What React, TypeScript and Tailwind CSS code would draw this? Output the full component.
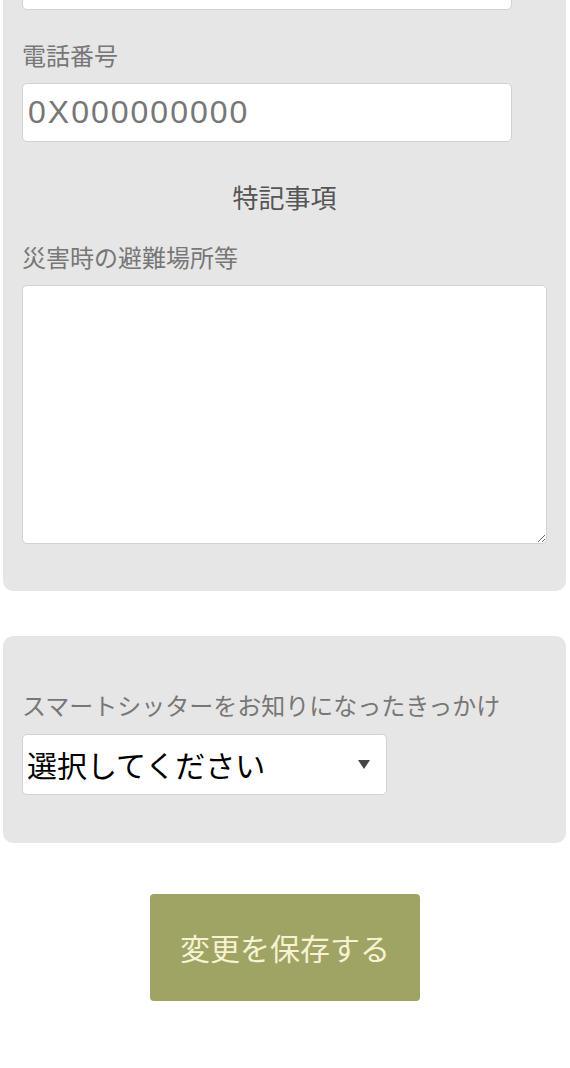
import React from "react";

const font = { fontFamily: '"Noto Sans CJK JP", "Noto Sans", sans-serif' };

const App = () => {
  return (
    <div
      className="min-h-screen bg-white flex flex-col items-stretch overflow-hidden"
      style={font}
    >
      {/* Contact / notes panel (scrolled, top cut off) */}
      <div className="-mt-[70px] ml-[3px] mr-[4px] bg-[#e6e6e6] rounded-[10px] px-[19px] pt-[21px] pb-[47px] flex flex-col">
        <input
          type="text"
          className="w-[490px] h-[59px] bg-white border border-[#d2d2d2] rounded-[5px] px-[5px] text-[30px] outline-none"
        />

        <label className="mt-[27px] text-[24px] leading-[36px] text-[#777]">
          電話番号
        </label>
        <input
          type="tel"
          placeholder="0X000000000"
          className="mt-[10px] w-[490px] h-[59px] bg-white border border-[#d2d2d2] rounded-[5px] px-[5px] text-[32px] tracking-[2px] text-[#333] placeholder:text-[#777] outline-none"
          style={{ fontFamily: '"Liberation Sans", "Noto Sans", sans-serif' }}
        />

        <p className="mt-[35px] text-center text-[26px] leading-[39px] text-[#555]">
          特記事項
        </p>

        <label className="mt-[23px] text-[24px] leading-[36px] text-[#777]">
          災害時の避難場所等
        </label>
        <textarea className="mt-[10px] w-full h-[259px] bg-white border border-[#d2d2d2] rounded-[5px] p-2 text-[24px] outline-none resize-y" />
      </div>

      {/* How did you hear about us */}
      <div className="mt-[45px] ml-[3px] mr-[4px] bg-[#e6e6e6] rounded-[10px] px-[19px] pt-[51px] pb-[48px] flex flex-col">
        <label className="text-[24px] leading-[36px] text-[#777]">
          スマートシッターをお知りになったきっかけ
        </label>
        <div className="relative mt-[11px] w-[365px]">
          <select className="w-full h-[61px] appearance-none bg-white border border-[#d2d2d2] rounded-[5px] pl-[4px] pr-10 text-[30px] text-black outline-none">
            <option>選択してください</option>
          </select>
          <svg
            className="absolute left-[336px] top-[26px] w-[12px] h-[9px] pointer-events-none"
            viewBox="0 0 12 9"
          >
            <polygon points="0,0 12,0 6,9" fill="#444" />
          </svg>
        </div>
      </div>

      {/* Save */}
      <div className="mt-[51px] flex justify-center">
        <button className="w-[270px] h-[107px] bg-[#9fa363] rounded-[4px] text-[30px] text-[#f6f2d4]">
          変更を保存する
        </button>
      </div>
    </div>
  );
};

export default App;
